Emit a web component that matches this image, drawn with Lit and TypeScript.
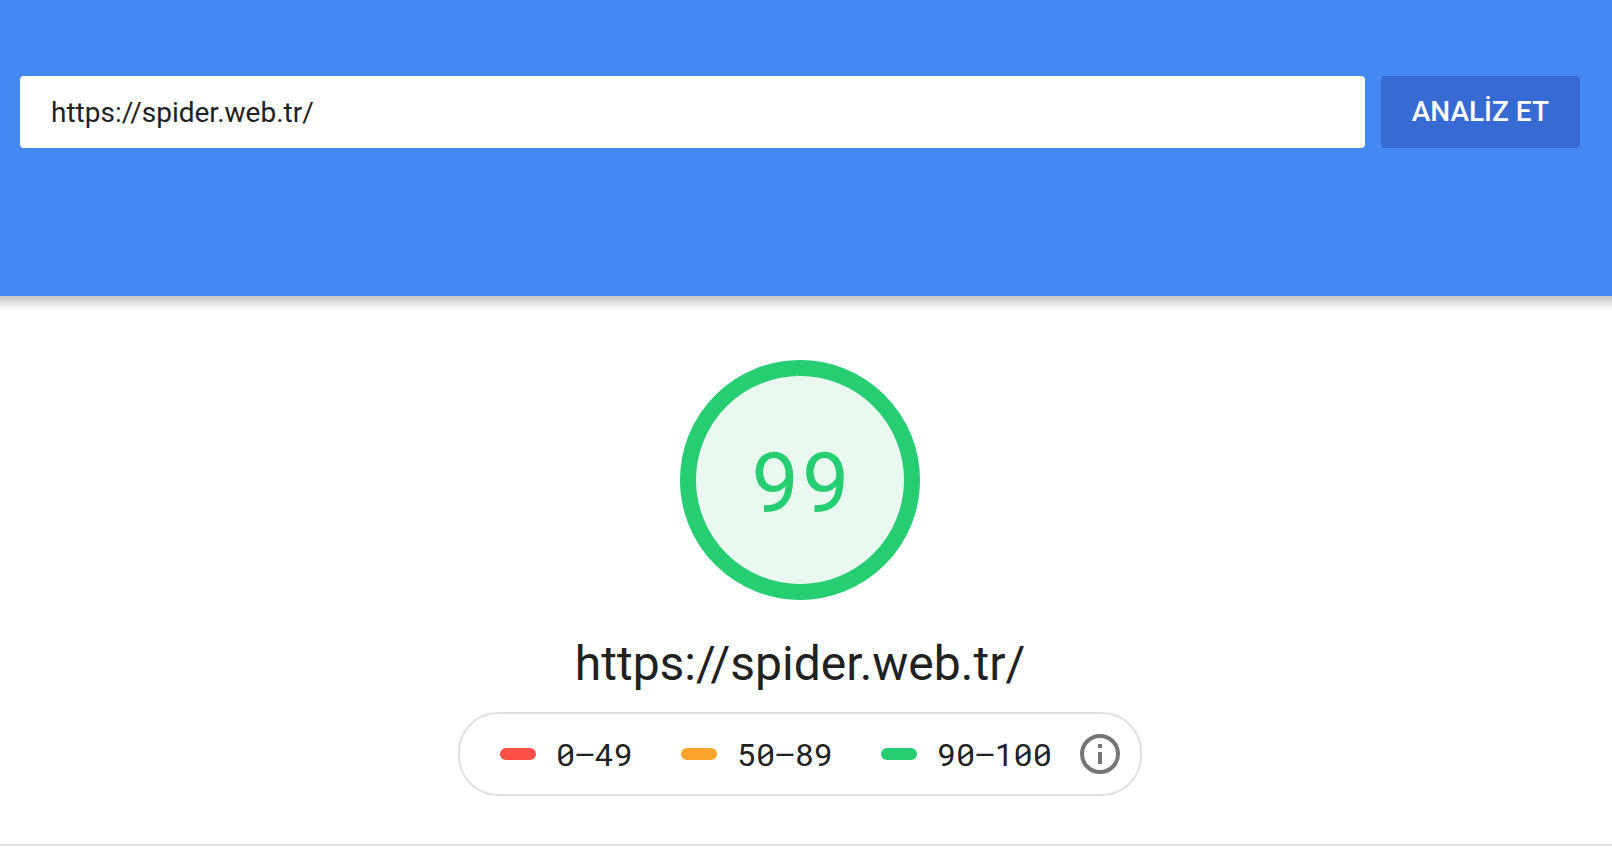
import { LitElement, html, css } from "lit";
import { customElement, property, state } from "lit/decorators.js";

@customElement("url-bar")
class UrlBar extends LitElement {
  @property() url = "";

  static styles = css`
    :host {
      display: block;
      position: relative;
      background: #4688f1;
    }
    :host::after {
      content: "";
      position: absolute;
      top: 100%;
      left: 0;
      right: 0;
      height: 16px;
      background: linear-gradient(
        rgba(0, 0, 0, 0.22),
        rgba(0, 0, 0, 0.18) 25%,
        rgba(0, 0, 0, 0.08) 55%,
        rgba(0, 0, 0, 0.02) 80%,
        transparent
      );
      pointer-events: none;
    }
    .form {
      display: flex;
      gap: 16px;
      padding: 76px 32px 148px 20px;
    }
    .field {
      flex: 1;
      min-width: 0;
      display: flex;
    }
    .input,
    .button {
      box-sizing: border-box;
      height: 72px;
      padding: 0 31px;
      border: 0;
      border-radius: 4px;
      font-family: Roboto, sans-serif;
      font-size: 28px;
      line-height: 36px;
    }
    .input {
      width: 100%;
      background: #fff;
      color: #212121;
    }
    .button {
      background: #376ad3;
      color: #fff;
      font-weight: 500;
      white-space: nowrap;
      cursor: pointer;
    }
  `;

  render() {
    return html`
      <form class="form" @submit=${(e: Event) => e.preventDefault()}>
        <label class="field">
          <input class="input" type="text" aria-label="URL" .value=${this.url} />
        </label>
        <button class="button" type="submit">ANALİZ ET</button>
      </form>
    `;
  }
}

@customElement("score-gauge")
class ScoreGauge extends LitElement {
  @property({ type: Number }) score = 0;

  static styles = css`
    :host {
      display: grid;
      width: 240px;
      height: 240px;
    }
    .ring,
    .score {
      grid-area: 1 / 1;
    }
    .score {
      align-self: center;
      justify-self: center;
      color: #26ce71;
      font-family: "Roboto Mono", "Noto Sans Mono", Roboto, monospace;
      font-size: 84px;
      line-height: 112px;
    }
  `;

  render() {
    return html`
      <svg class="ring" viewBox="0 0 240 240" width="240" height="240" aria-hidden="true">
        <circle cx="120" cy="120" r="112" fill="#e9f9f0" stroke="#26ce71" stroke-width="16" />
        <path d="M116.500 15.400h1.500v1h-1.500z" fill="#e9f9f0" />
      </svg>
      <div class="score">${this.score}</div>
    `;
  }
}

@customElement("score-scale")
class ScoreScale extends LitElement {
  static styles = css`
    :host {
      display: block;
    }
    .scale {
      display: flex;
      align-items: center;
      gap: 28px;
      padding: 20px 20px 20px 40px;
      border: 2px solid #e0e0e0;
      border-radius: 40px;
    }
    .ranges {
      display: flex;
      gap: 48px;
      margin: 0;
      padding: 0;
      list-style: none;
    }
    .range {
      display: flex;
      align-items: center;
      gap: 20px;
      color: #212121;
      font-family: "Roboto Mono", "Noto Sans Mono", "DejaVu Sans Mono", monospace;
      font-size: 32px;
      line-height: 40px;
      white-space: nowrap;
    }
    .mark {
      width: 36px;
      height: 12px;
      border-radius: 6px;
    }
    .fail {
      background: #ff4f49;
    }
    .average {
      background: #ffa42a;
    }
    .pass {
      background: #26ce71;
    }
    .info {
      display: block;
      width: 40px;
      height: 40px;
      padding: 0;
      border: 0;
      background: none;
      cursor: pointer;
    }
    .icon {
      display: block;
    }
  `;

  private ranges = [
    { kind: "fail", text: "0–49" },
    { kind: "average", text: "50–89" },
    { kind: "pass", text: "90–100" },
  ];

  render() {
    return html`
      <div class="scale">
        <ul class="ranges">
          ${this.ranges.map(
            (r) => html`<li class="range"><span class="mark ${r.kind}"></span><span>${r.text}</span></li>`
          )}
        </ul>
        <button class="info" type="button" aria-label="Bilgi">
          <svg class="icon" viewBox="0 0 40 40" width="40" height="40" aria-hidden="true">
            <circle cx="20" cy="20" r="18" fill="none" stroke="#757575" stroke-width="4" />
            <path d="M18 10h4v4h-4zM18 18h4v12h-4z" fill="#757575" />
          </svg>
        </button>
      </div>
    `;
  }
}

@customElement("app-root")
class AppRoot extends LitElement {
  @state() private url = "https://spider.web.tr/";

  static styles = css`
    :host {
      display: block;
      min-height: 100vh;
      background: #fff;
      font-family: Roboto, sans-serif;
    }
    .summary {
      display: flex;
      flex-direction: column;
      align-items: center;
      padding: 64px 12px 48px 0;
    }
    .title {
      margin: 32px 0 16px;
      color: #212121;
      font-size: 48px;
      font-weight: 400;
      line-height: 64px;
    }
    .rule {
      height: 2px;
      margin: 0;
      border: 0;
      background: #e0e0e0;
    }
  `;

  render() {
    return html`
      <url-bar .url=${this.url}></url-bar>
      <main class="summary">
        <score-gauge .score=${99}></score-gauge>
        <h1 class="title">${this.url}</h1>
        <score-scale></score-scale>
      </main>
      <hr class="rule" />
    `;
  }
}
